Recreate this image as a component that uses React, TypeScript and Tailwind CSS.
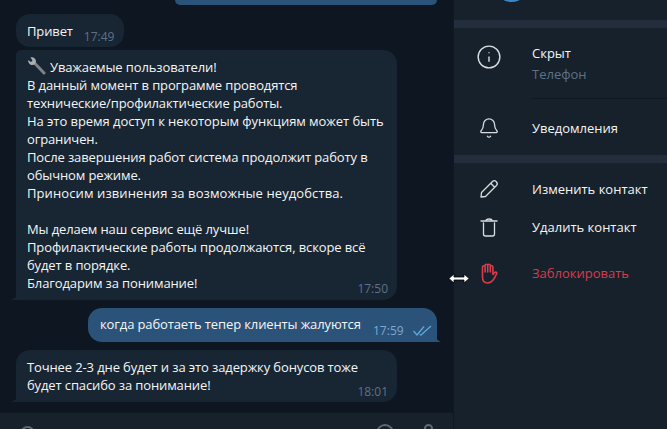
import { Info, Bell } from 'lucide-react';

const font = "font-['Open_Sans',sans-serif]";

function Checks() {
  return (
    <svg width="19" height="11" viewBox="0 0 19 11" fill="none" stroke="#5fa8e0" strokeWidth="1.3" className="block">
      <path d="M0.5 6 L4 10 L11 1.5" />
      <path d="M6.5 9.5 L8 10 L18 1" />
    </svg>
  );
}

function Wrench() {
  return (
    <svg width="19" height="20" viewBox="0 0 19 20" className="absolute left-0 top-[-2px]">
      <path d="M7 6.5 L17 17" stroke="#7d8389" strokeWidth="3" strokeLinecap="round" />
      <path d="M1 4 L4 6 L5.5 4.5 L3.5 1.5 C6 0.5 9 2.5 9 5.5 C9 7.5 7 9.5 4.5 9 C2.5 8.8 1 6.5 1 4 Z" fill="#a9aeb3" />
    </svg>
  );
}

function Pencil() {
  return (
    <svg width="24" height="24" viewBox="0 0 24 24" fill="none" stroke="#d8dde2" strokeWidth="1.3" strokeLinejoin="round">
      <path d="M4.5 15.5 L15.5 4.5 C16.5 3.5 18 3.5 19.3 4.7 C20.5 6 20.5 7.5 19.5 8.5 L8.5 19.5 L4 20 Z" />
      <path d="M13.7 6.3 L17.7 10.3" />
    </svg>
  );
}

function Trash() {
  return (
    <svg width="24" height="24" viewBox="0 0 24 24" fill="none" stroke="#d8dde2" strokeWidth="1.3" strokeLinecap="round">
      <path d="M4 6 H20" />
      <path d="M9 5.5 C9 3.5 15 3.5 15 5.5" />
      <path d="M6.5 8 V19 C6.5 20.5 7.5 21 8.5 21 H15.5 C16.5 21 17.5 20.5 17.5 19 V8" />
    </svg>
  );
}

function StopHand() {
  return (
    <svg width="24" height="24" viewBox="0 0 24 24" fill="none" stroke="#d63d4d" strokeWidth="1.6" strokeLinecap="round" strokeLinejoin="round">
      <path d="M5.5 14 V6 a1.3 1.3 0 0 1 2.6 0 V11 M8.1 4.5 a1.3 1.3 0 0 1 2.6 0 V11 M10.7 4.5 a1.3 1.3 0 0 1 2.6 0 V11 M13.3 6 a1.3 1.3 0 0 1 2.6 0 V13.5 l1.8 -2 c1 -1 2.6 0 1.9 1.3 l-2.6 5 C15.5 20 14 22 10.5 22 C7 22 5.5 19.5 5.5 16 V14" />
    </svg>
  );
}

function SideRow({ icon, label, className }: { icon: React.ReactNode; label: string; className: string }) {
  return (
    <div className={`flex items-center ${className}`}>
      <div className="w-[70px] mr-2 flex justify-center text-[#d8dde2]">{icon}</div>
      <span className="text-[13px] leading-[18px]">{label}</span>
    </div>
  );
}

export default function App() {
  return (
    <div className={`relative w-[667px] h-[429px] overflow-hidden flex bg-[#0e1621] text-[#f5f5f5] ${font}`}>
      {/* chat */}
      <div className="w-[453px] h-full flex flex-col">
        <div className="flex-1 min-h-0 flex flex-col tracking-[-0.12px]">
          <div className="ml-[175px] w-[262px] h-[5px] bg-[#2b5278] rounded-b-[14px]" />

          <div className="mt-[9px] ml-4 w-[108px] h-[33px] bg-[#182533] rounded-[14px] flex pl-[11px] pt-[8px] text-[13px] leading-[18px]">
            <span>Привет</span>
            <span className="ml-[11px] mt-[6px] text-[12px] leading-[18px] tracking-normal text-[#5f7186]">17:49</span>
          </div>

          <div className="relative mt-[3px] ml-4 w-[381px] h-[250px] bg-[#182533] rounded-t-[5px] rounded-tr-[14px] rounded-br-[14px] pl-[11px] pt-[8px] text-[13px] leading-[18px]">
            <p className="relative h-[18px] pl-[23px] whitespace-nowrap"><Wrench />Уважаемые пользователи!</p>
            <p>В данный момент в программе проводятся</p>
            <p>технические/профилактические работы.</p>
            <p className="tracking-[-0.06px]">На это время доступ к некоторым функциям может быть</p>
            <p>ограничен.</p>
            <p>После завершения работ система продолжит работу в</p>
            <p>обычном режиме.</p>
            <p className="tracking-[0.1px]">Приносим извинения за возможные неудобства.</p>
            <p>&nbsp;</p>
            <p>Мы делаем наш сервис ещё лучше!</p>
            <p>Профилактические работы продолжаются, вскоре всё</p>
            <p>будет в порядке.</p>
            <p>Благодарим за понимание!</p>
            <span className="absolute right-[9px] bottom-[2px] text-[12px] leading-[18px] tracking-normal text-[#5f7186]">17:50</span>
            <svg className="absolute left-[-6px] bottom-0" width="8" height="10" viewBox="0 0 8 10">
              <path d="M8 0 C8 6 5 9 0 10 L8 10 Z" fill="#182533" />
            </svg>
          </div>

          <div className="relative mt-2 ml-[88px] w-[349px] h-[34px] bg-[#2b5278] rounded-l-[14px] rounded-tr-[14px] flex items-start pl-[12px] pt-[7px] text-[13px] leading-[18px] whitespace-nowrap">
            <span>когда работаеть тепер клиенты жалуются</span>
            <span className="absolute left-[285px] top-[14px] text-[12px] leading-[18px] tracking-normal text-[#7da8d3]">17:59</span>
            <span className="absolute left-[325px] top-[17px]"><Checks /></span>
            <svg className="absolute right-[-6px] bottom-0" width="8" height="10" viewBox="0 0 8 10">
              <path d="M0 0 C0 6 3 9 6 10 L0 10 Z" fill="#2b5278" />
            </svg>
          </div>

          <div className="relative mt-2 ml-4 w-[381px] h-[52px] bg-[#182533] rounded-r-[14px] rounded-tl-[14px] pl-[11px] pt-[8px] text-[13px] leading-[18px]">
            <p>Точнее 2-3 дне будет и за это задержку бонусов тоже</p>
            <p>будет спасибо за понимание!</p>
            <span className="absolute right-[9px] bottom-[1px] text-[12px] leading-[18px] tracking-normal text-[#5f7186]">18:01</span>
            <svg className="absolute left-[-6px] bottom-0" width="8" height="10" viewBox="0 0 8 10">
              <path d="M8 0 C8 6 5 9 0 10 L8 10 Z" fill="#182533" />
            </svg>
          </div>
        </div>

        {/* composer, cut off by the window */}
        <div className="relative h-[17px] bg-[#17212b] border-t border-[#101921] overflow-hidden">
          <div className="absolute left-5 top-[13px] w-[15px] h-[15px] rounded-full border-2 border-[#5d6873]" />
          <div className="absolute left-[376px] top-[11px] w-[18px] h-[18px] rounded-full border-2 border-[#5d6873]" />
          <div className="absolute left-[424px] top-[11px] w-[9px] h-[14px] rounded-full border-2 border-[#5d6873]" />
        </div>
      </div>

      {/* contact panel */}
      <div className="w-[214px] h-full bg-[#17212b] border-l border-[#101921] flex flex-col">
        <div className="h-5 relative overflow-hidden">
          <div className="absolute left-[40px] top-[-33px] w-[35px] h-[35px] rounded-full bg-[#3a86c8]" />
        </div>
        <div className="h-2 bg-[#232e3c]" />

        <div className="flex items-start pt-[16px] h-[70px]">
          <div className="w-[70px] mr-2 flex justify-center text-[#d8dde2]"><Info size={26} strokeWidth={1.3} /></div>
          <div>
            <div className="text-[13px] leading-[18px]">Скрыт</div>
            <div className="mt-[3px] text-[13px] leading-[18px] text-[#5f7186]">Телефон</div>
          </div>
        </div>
        <div className="ml-[77px] h-px bg-[#101921]" />
        <SideRow className="h-[56px] pt-[1px]" icon={<Bell size={22} strokeWidth={1.4} />} label="Уведомления" />
        <div className="h-2 bg-[#232e3c]" />

        <SideRow className="mt-[17px] h-[18px]" icon={<Pencil />} label="Изменить контакт" />
        <SideRow className="mt-[20px] h-[18px]" icon={<Trash />} label="Удалить контакт" />
        <div className="mt-[28px] h-[18px] flex items-center text-[#d63d4d]">
          <div className="w-[70px] mr-2 flex justify-center"><StopHand /></div>
          <span className="text-[13px] leading-[18px]">Заблокировать</span>
        </div>
      </div>

      {/* resize cursor */}
      <svg className="absolute left-[448px] top-[273px]" width="22" height="11" viewBox="0 0 22 11">
        <path d="M0.8 5.5 L6 1 V4 H16 V1 L21.2 5.5 L16 10 V7 H6 V10 Z" fill="#fff" stroke="#000" strokeWidth="0.8" />
      </svg>
    </div>
  );
}
